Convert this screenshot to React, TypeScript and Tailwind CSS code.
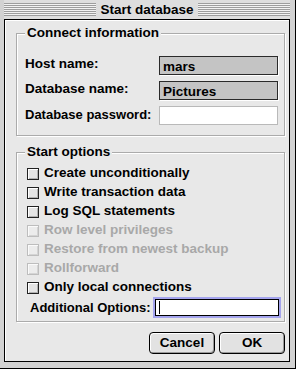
import React from "react";

interface StartOption {
    label: string;
    disabled?: boolean;
}

const startOptions: StartOption[] = [
    { label: "Create unconditionally" },
    { label: "Write transaction data" },
    { label: "Log SQL statements" },
    { label: "Row level privileges", disabled: true },
    { label: "Restore from newest backup", disabled: true },
    { label: "Rollforward", disabled: true },
    { label: "Only local connections" },
];

const stripes =
    "h-[13px] flex-1 bg-[repeating-linear-gradient(to_bottom,#9d9d9d_0px,#9d9d9d_1px,#f2f2f2_1px,#f2f2f2_2px)]";

const CheckBox: React.FC<{ disabled?: boolean }> = ({ disabled }) => (
    <span
        className={
            disabled
                ? "h-[12px] w-[12px] shrink-0 border border-[#bdbdbd] bg-[#ececec] shadow-[inset_1px_1px_0_#fafafa,inset_-1px_-1px_0_#d4d4d4]"
                : "h-[12px] w-[12px] shrink-0 border border-[#222] bg-[#e4e4e4] shadow-[inset_1px_1px_0_#fff,inset_-1px_-1px_0_#b0b0b0]"
        }
    />
);

const Button: React.FC<{ children: React.ReactNode }> = ({ children }) => (
    <button className="flex h-[22px] w-[66px] items-center justify-center rounded-[4px] border border-black bg-[#e2e2e2] text-[13.5px] font-bold leading-none shadow-[inset_1px_1px_0_#fff,inset_-1px_-1px_0_#9a9a9a]">
        {children}
    </button>
);

export default function App() {
    return (
        <div className="flex h-[369px] w-[296px] flex-col border-b border-r border-black bg-[#d2d2d2] pl-[4px] pr-[5px] font-['Liberation_Sans',Arial,sans-serif] text-black">
            {/* title bar */}
            <div className="flex h-[19px] shrink-0 items-center bg-[#dedede]">
                <div className={stripes} />
                <div className="px-[4px] text-[13.5px] font-bold leading-[19px]">Start database</div>
                <div className={stripes} />
            </div>

            {/* dialog body */}
            <div className="flex h-[343px] flex-col border border-black bg-[#e8e8e8] shadow-[inset_1px_1px_0_#fff]">
                <fieldset className="ml-[11px] mr-[4px] mt-[5px] border border-[#ababab] pb-[10px] pl-[8px] shadow-[inset_1px_1px_0_#fff,1px_1px_0_#fff]">
                    <legend className="bg-[#e8e8e8] px-[2px] text-[13.5px] font-bold leading-[16px]">
                        Connect information
                    </legend>
                    <div className="grid grid-cols-[134px_119px] gap-y-[6px] pt-[15px] text-[13px] font-bold whitespace-nowrap">
                        <div className="flex h-[19px] items-center pb-[2px] text-[13.5px]">Host name:</div>
                        <div className="h-[19px] border border-[#2a2a2a] bg-[#c4c4c4] pl-[3px] pt-[1px] text-[13.5px] leading-[17px] shadow-[1px_1px_0_#fff]">
                            mars
                        </div>
                        <div className="flex h-[19px] items-center pb-[2px] text-[13.5px]">Database name:</div>
                        <div className="h-[19px] border border-[#2a2a2a] bg-[#c4c4c4] pl-[3px] pt-[1px] text-[13.5px] leading-[17px] shadow-[1px_1px_0_#fff]">
                            Pictures
                        </div>
                        <div className="flex h-[19px] items-center pb-[1px]">Database password:</div>
                        <div className="h-[19px] border border-[#b9b9b9] bg-white" />
                    </div>
                </fieldset>

                <fieldset className="ml-[11px] mr-[4px] mt-[8px] border border-[#ababab] pb-[3px] pl-[10px] shadow-[inset_1px_1px_0_#fff,1px_1px_0_#fff]">
                    <legend className="-ml-[2px] bg-[#e8e8e8] px-[2px] text-[13.5px] font-bold leading-[16px]">
                        Start options
                    </legend>
                    <div className="flex flex-col pt-[4px] text-[13.5px] font-bold whitespace-nowrap">
                        {startOptions.map((opt) => (
                            <label
                                key={opt.label}
                                className={`flex h-[19px] items-center gap-[5px] ${opt.disabled ? "text-[#a8a8a8]" : ""}`}
                            >
                                <CheckBox disabled={opt.disabled} />
                                {opt.label}
                            </label>
                        ))}
                        <div className="flex h-[21px] items-center">
                            <span className="ml-[3px] w-[123px] shrink-0 text-[13px]">Additional Options:</span>
                            <div className="h-[21px] w-[128px] shrink-0 border-2 border-[#a4a4ee]">
                                <div className="flex h-full items-center border border-black bg-white pl-[3px]">
                                    <span className="h-[13px] w-[1px] bg-black" />
                                </div>
                            </div>
                        </div>
                    </div>
                </fieldset>

                <div className="mt-[10px] flex justify-end gap-[4px] pr-[4px]">
                    <Button>Cancel</Button>
                    <Button>OK</Button>
                </div>
            </div>
        </div>
    );
}
